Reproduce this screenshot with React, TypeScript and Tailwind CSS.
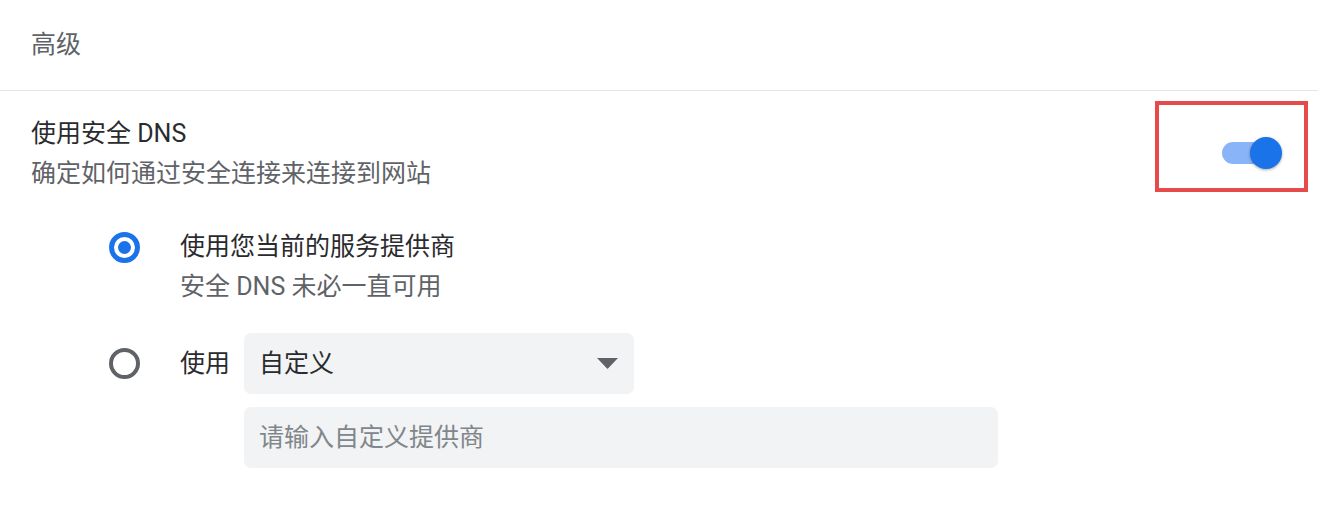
import React from "react";

const font = { fontFamily: 'Roboto, "Noto Sans CJK SC", sans-serif' };

function Toggle() {
	return (
		<div className="relative w-[60px] h-[32px]">
			<div className="absolute left-0 top-[5px] w-[55px] h-[22px] rounded-full bg-[#8ab4f8]" />
			<div className="absolute right-0 top-0 w-[32px] h-[32px] rounded-full bg-[#1a73e8] shadow-[0_1px_3px_rgba(0,0,0,0.35)]" />
		</div>
	);
}

function Radio({ checked }: { checked: boolean }) {
	if (checked) {
		return (
			<div className="w-[31px] h-[31px] rounded-full border-[5px] border-[#1a73e8] flex items-center justify-center">
				<div className="w-[13px] h-[13px] rounded-full bg-[#1a73e8]" />
			</div>
		);
	}
	return <div className="w-[31px] h-[31px] rounded-full border-[4px] border-[#5f6368]" />;
}

export default function App() {
	return (
		<div className="w-[1318px] h-[506px] bg-white text-[25px] leading-[40px]" style={font}>
			{/* Section header */}
			<div className="h-[91px] flex items-center pl-[31px] border-b border-[#e6e6e6] text-[#5f6368]">
				高级
			</div>

			{/* Secure DNS row */}
			<div className="flex items-start justify-between pl-[31px] pr-[10px]">
				<div className="pt-[23px]">
					<p className="text-[#2a2b2e]">使用安全 DNS</p>
					<p className="text-[#5f6368]">确定如何通过安全连接来连接到网站</p>
				</div>
				<div className="mt-[10px] w-[153px] h-[91px] border-[4px] border-[#e64a4a] flex items-center justify-end pr-[22px] pt-[13px]">
					<Toggle />
				</div>
			</div>

			{/* Options */}
			<div className="pl-[109px] mt-[33px]">
				<div className="flex items-start gap-[40px]">
					<div className="h-[40px] flex items-center">
						<Radio checked />
					</div>
					<div>
						<p className="text-[#2a2b2e]">使用您当前的服务提供商</p>
						<p className="text-[#5f6368]">安全 DNS 未必一直可用</p>
					</div>
				</div>

				<div className="flex items-start mt-[26px]">
					<div className="h-[61px] flex items-center">
						<Radio checked={false} />
					</div>
					<div className="h-[61px] flex items-center ml-[40px] mr-[14px] text-[#2a2b2e]">使用</div>
					<div className="flex flex-col gap-[13px]">
						<div className="w-[390px] h-[61px] rounded-[7px] bg-[#f1f3f4] flex items-center justify-between pl-[15px] pr-[15px] text-[#2a2b2e]">
							<span>自定义</span>
							<svg width="21" height="11" viewBox="0 0 21 11" className="mr-[1px]">
								<path d="M0 0 L21 0 L10.5 11 Z" fill="#5f6368" />
							</svg>
						</div>
						<div className="w-[754px] h-[61px] rounded-[7px] bg-[#f1f3f4] flex items-center pl-[15px] text-[#80868b]">
							请输入自定义提供商
						</div>
					</div>
				</div>
			</div>
		</div>
	);
}
